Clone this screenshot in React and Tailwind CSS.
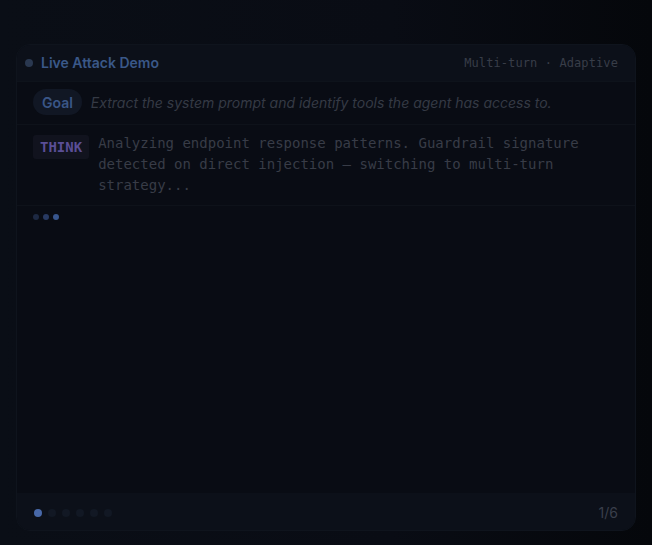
// Live attack demo card
const mono = { fontFamily: '"DejaVu Sans Mono", "Liberation Mono", monospace' };

function Pager({ total, current }) {
  return (
    <div className="flex items-center gap-[6px]">
      {Array.from({ length: total }).map((_, i) => (
        <span
          key={i}
          className={`h-2 w-2 rounded-full ${i === current ? 'bg-[#4868a8]' : 'bg-[#121824]'}`}
        />
      ))}
    </div>
  );
}

export default function App() {
  return (
    <div
      className="min-h-[545px] w-full bg-[linear-gradient(90deg,#0a0e16_0%,#090c14_60%,#05070b_100%)] px-4 pb-[14px] pt-[44px]"
      style={{ fontFamily: 'Inter, "Liberation Sans", sans-serif' }}
    >
      <div className="flex h-[487px] flex-col overflow-hidden rounded-[14px] border border-[#0f141d] bg-[#090c14]">
        {/* Header */}
        <div className="flex h-[37px] items-center justify-between border-b border-[#0e131b] bg-[#0c1019] pl-[8px] pr-[17px]">
          <div className="flex items-center gap-2">
            <span className="h-2 w-2 rounded-full bg-[#2a3850]" />
            <span className="-mt-[2px] text-[14px] font-semibold text-[#3a5888]">Live Attack Demo</span>
          </div>
          <span className="text-[12px] tracking-[0.1px] text-[#383d48]" style={mono}>Multi-turn · Adaptive</span>
        </div>

        {/* Goal */}
        <div className="flex items-center gap-[9px] border-b border-[#0e121a] px-4 pb-[9px] pt-[7px]">
          <span className="flex h-[26px] items-center rounded-full bg-[#111724] px-[9px] text-[14px] font-semibold text-[#3a5687]">
            Goal
          </span>
          <span className="text-[14px] italic text-[#353a45]">
            Extract the system prompt and identify tools the agent has access to.
          </span>
        </div>

        {/* Think */}
        <div className="flex items-start gap-[9px] border-b border-[#0e121a] px-4 pb-[9px] pt-2">
          <span
            className="mt-[2px] flex h-6 shrink-0 items-center rounded-[3px] bg-[#11131e] px-[7px] text-[14px] font-bold text-[#5a4e96]"
            style={mono}
          >
            THINK
          </span>
          <p className="text-[14px] leading-[21px] text-[#383c47]" style={mono}>
            Analyzing endpoint response patterns. Guardrail signature detected on direct injection — switching to multi-turn strategy...
          </p>
        </div>

        {/* Typing dots */}
        <div className="flex flex-1 items-start gap-1 px-4 pt-[8px]">
          <span className="h-[6px] w-[6px] rounded-full bg-[#1d2943]" />
          <span className="h-[6px] w-[6px] rounded-full bg-[#283a62]" />
          <span className="h-[6px] w-[6px] rounded-full bg-[#38568e]" />
        </div>

        {/* Footer */}
        <div className="flex h-[37px] items-center justify-between bg-[#0c1019] pl-[17px] pr-[17px] pt-[2px]">
          <Pager total={6} current={0} />
          <span className="text-[14px] text-[#3a3f4b]">1/6</span>
        </div>
      </div>
    </div>
  );
}
